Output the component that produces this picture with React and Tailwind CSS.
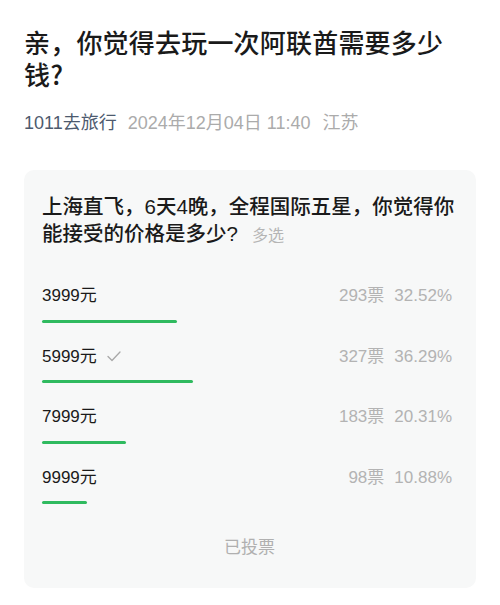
import React from "react";

const options = [
  { label: "3999元", votes: "293票", pct: 32.52, checked: false },
  { label: "5999元", votes: "327票", pct: 36.29, checked: true },
  { label: "7999元", votes: "183票", pct: 20.31, checked: false },
  { label: "9999元", votes: "98票", pct: 10.88, checked: false },
];

export default function App() {
  return (
    <div
      className="w-[500px] h-[605px] bg-white overflow-hidden px-6 pt-[26px]"
      style={{ fontFamily: '"Liberation Sans", "Noto Sans CJK SC", sans-serif' }}
    >
      <h1
        className="text-[26px] leading-[32px] font-medium text-[#1a1a1a] tracking-[0.2px]"
        style={{ fontFamily: '"Noto Sans CJK SC", sans-serif' }}
      >
        亲，你觉得去玩一次阿联酋需要多少钱?
      </h1>
      <div className="mt-[21px] flex items-center text-[18px] leading-[24px]">
        <span className="text-[#4d5a6e]">1011去旅行</span>
        <span className="ml-[11px] text-[#ababab]">2024年12月04日 11:40</span>
        <span className="ml-[12px] text-[#ababab]">江苏</span>
      </div>
      <div className="mt-[35px] rounded-[10px] bg-[#f7f8f8] pl-[18px] pr-[19px] pt-[23px] pb-[28px]">
        <p className="text-[20.5px] leading-[27px] text-[#1a1a1a] font-medium">
          上海直飞，6天4晚，全程国际五星，你觉得你能接受的价格是多少?
          <span className="ml-[14px] inline-block text-[16px] leading-[20px] font-normal text-[#b5b5b5]">多选</span>
        </p>
        <div className="mt-[37px] flex flex-col gap-[22px]">
          {options.map((o) => (
            <div key={o.label}>
              <div className="flex items-center justify-between h-[24px] text-[17px] leading-[24px]">
                <div className="flex items-center text-[#1a1a1a]">
                  <span>{o.label}</span>
                  {o.checked && (
                    <svg className="ml-[10px]" width="14" height="11" viewBox="0 0 14 11" fill="none">
                      <path d="M1 5.5 L5 9.5 L13 1" stroke="#a8a8a8" strokeWidth="1.3" strokeLinecap="round" strokeLinejoin="round" />
                    </svg>
                  )}
                </div>
                <div className="flex items-center gap-[10px] pr-[5px] text-[#b3b3b3]">
                  <span>{o.votes}</span>
                  <span>{o.pct.toFixed(2)}%</span>
                </div>
              </div>
              <div className="mt-[11.5px] h-[3px]">
                <div
                  className="h-[3px] rounded-full bg-[#2fba5f]"
                  style={{ width: `${o.pct}%` }}
                />
              </div>
            </div>
          ))}
        </div>
        <div className="mt-[32px] text-center text-[17px] leading-[24px] text-[#b0b0b0]">
          已投票
        </div>
      </div>
    </div>
  );
}
